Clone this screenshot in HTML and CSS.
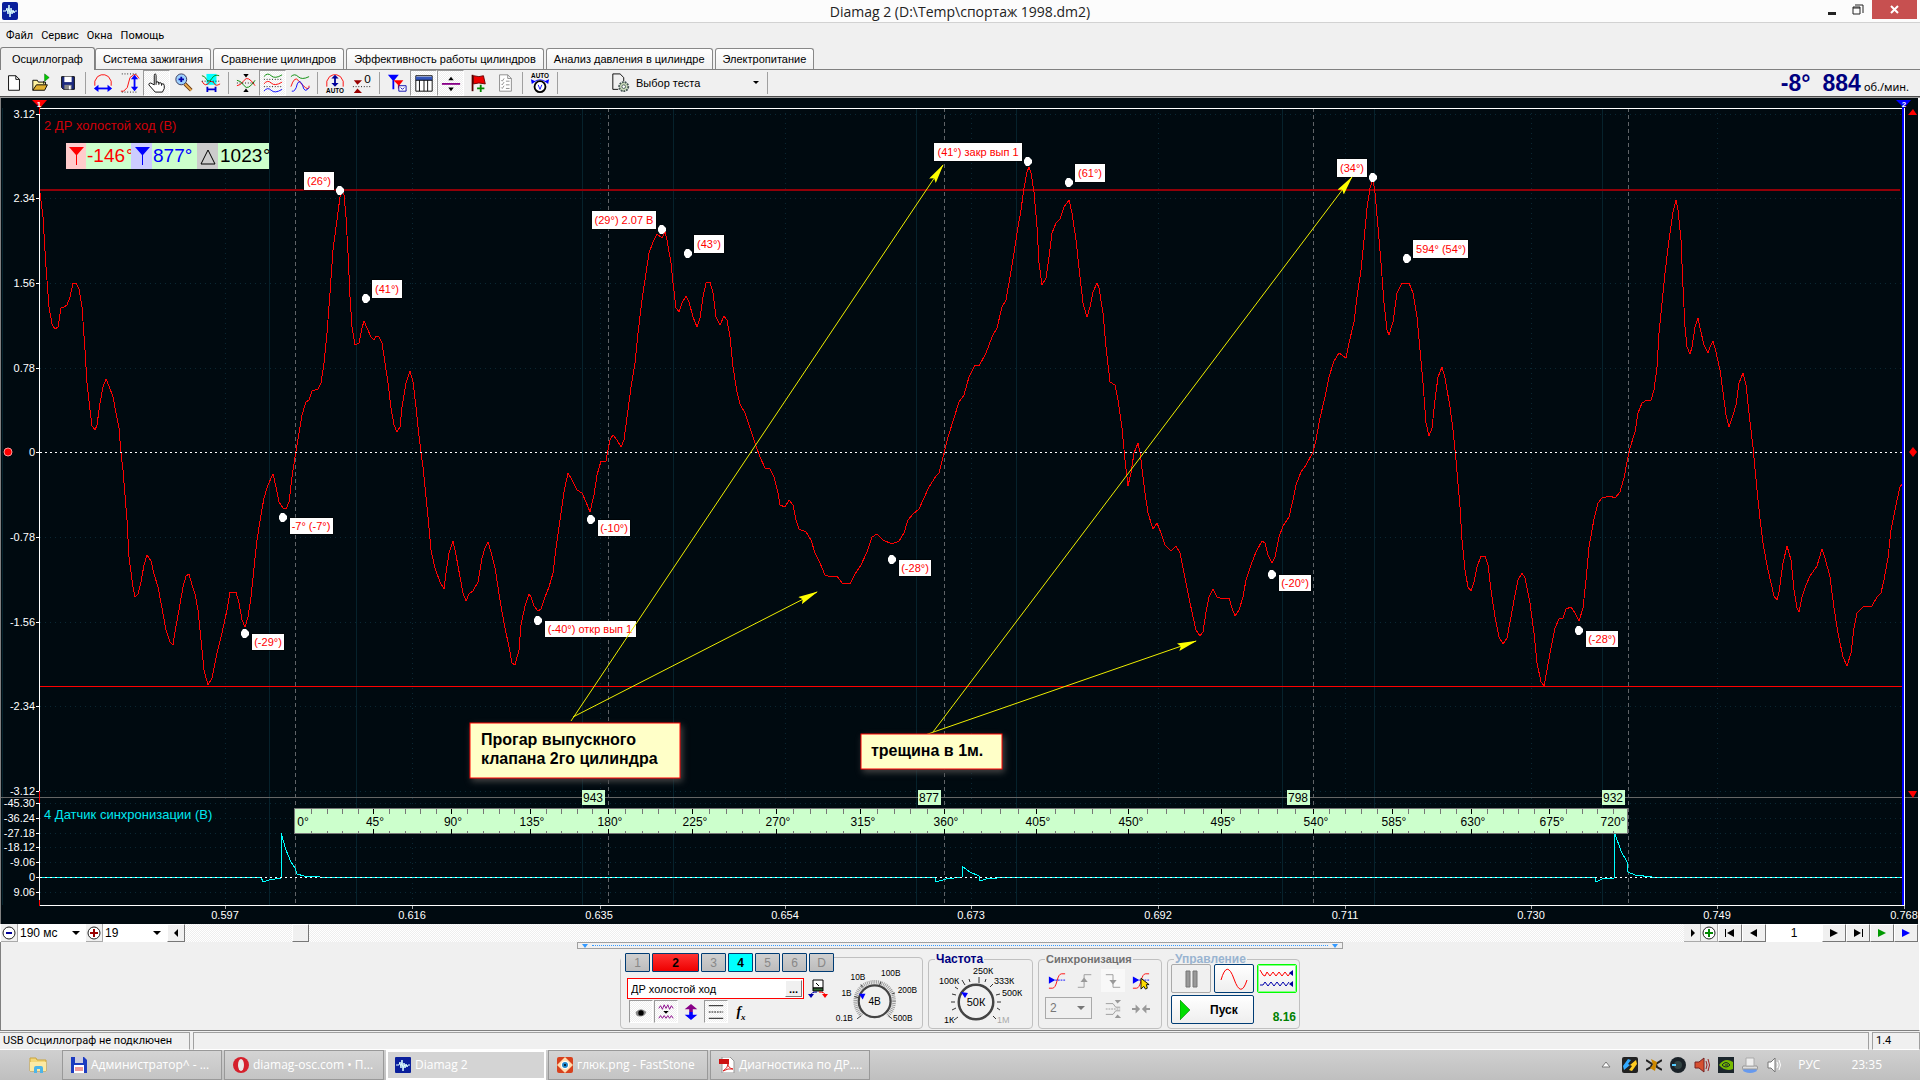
FILE: index.html
```html
<!DOCTYPE html>
<html lang="ru">
<head>
<meta charset="utf-8">
<title>Diamag 2 (D:\Temp\спортаж 1998.dm2)</title>
<link rel="stylesheet" href="styles.css">
</head>
<body>
<div class="app">
  <header class="titlebar">
    <svg class="app-icon" viewBox="0 0 16 18"><rect width="16" height="18" rx="2" fill="#0a1f9c"/><path d="M1 9h3l1-3 1 6 1-9 1 12 1-9 1 6 1-4 1 3 1-2h2" fill="none" stroke="#dff" stroke-width="1"/></svg>
    <h1 class="title">Diamag 2 (D:\Temp\спортаж 1998.dm2)</h1>
    <div class="window-buttons">
      <button class="win" aria-label="Свернуть"><svg viewBox="0 0 10 12" width="10" height="12"><path d="M1 8h8v3H1z" fill="#222"/></svg></button>
      <button class="win" aria-label="Развернуть"><svg viewBox="0 0 12 12" width="12" height="12"><path d="M3 1h8v8M1 3h7v7H1zM1 4h7" fill="none" stroke="#222"/></svg></button>
      <button class="win win-close" aria-label="Закрыть"><svg viewBox="0 0 10 10" width="10" height="10"><path d="M1 1l7 7M8 1L1 8" stroke="#fff" stroke-width="2"/></svg></button>
    </div>
  </header>

  <nav class="menu">
    <button>Файл</button><button>Сервис</button><button>Окна</button><button>Помощь</button>
  </nav>

  <div class="tabs" role="tablist">
    <button class="tab tab-active" role="tab">Осциллограф</button>
    <button class="tab" role="tab">Система зажигания</button>
    <button class="tab" role="tab">Сравнение цилиндров</button>
    <button class="tab" role="tab">Эффективность работы цилиндров</button>
    <button class="tab" role="tab">Анализ давления в цилиндре</button>
    <button class="tab" role="tab">Электропитание</button>
  </div>

  <div class="toolbar">
    <button class="tool" aria-label="Новый"><svg viewBox="0 0 22 22"><path d="M5 3h8l4 4v12H5z" fill="#fff" stroke="#000"/><path d="M13 3v4h4" fill="none" stroke="#000"/></svg></button>
    <button class="tool" aria-label="Открыть"><svg viewBox="0 0 22 22"><path d="M2 19V8h5l1 2h8v3" fill="#fff3a0" stroke="#000"/><path d="M2 19l4-6h12l-3 6z" fill="#e0b030" stroke="#000"/><path d="M15 1l5 4-5 4z" fill="#0c0" stroke="#060" stroke-width=".6"/><path d="M14 9v3" stroke="#000"/></svg></button>
    <button class="tool" aria-label="Сохранить"><svg viewBox="0 0 22 22"><path d="M4 4h14v14H6l-2-2z" fill="#1c2a80" stroke="#000"/><path d="M7 4h8v6H7z" fill="#fff"/><path d="M7 13h8v5H7z" fill="#888"/><path d="M12 14h2v4h-2z" fill="#fff"/></svg></button>
    <span class="sep"></span>
    <button class="tool" aria-label="Масштаб по ширине"><svg viewBox="0 0 22 22"><path d="M2 14V9l3-5 4-2h4l4 2 3 5v5" fill="none" stroke="#f00"/><path d="M3 17h16" stroke="#00f" stroke-width="2"/><path d="M1 17l5-4v8zM21 17l-5-4v8z" fill="#00f"/></svg></button>
    <button class="tool" aria-label="Масштаб по высоте"><svg viewBox="0 0 22 22"><path d="M1 20h3l4-4 3-11 4-3h3l3 4" fill="none" stroke="#f00"/><path d="M2 1h18M2 21h18" stroke="#000" stroke-dasharray="1 2"/><path d="M16 5v13" stroke="#00f" stroke-width="2"/><path d="M16 2l4 5h-8zM16 20l4-5h-8z" fill="#00f"/></svg></button>
    <button class="tool pressed" aria-label="Рука"><svg viewBox="0 0 22 22"><path d="M8 13V3q0-2 1-2t1 2v7q3-1 3 1 3-1 3 1 3-1 3 2v3l-2 4H9l-7-8q0-2 2-2z" fill="#fff" stroke="#000"/><path d="M10 10v3M13 11v2M16 12v2" stroke="#000"/></svg></button>
    <button class="tool" aria-label="Лупа"><svg viewBox="0 0 22 22"><path d="M12 12l7 7" stroke="#6b3a10" stroke-width="4"/><path d="M12 12l7 7" stroke="#f0b050" stroke-width="2"/><circle cx="8" cy="7" r="6" fill="#9cd0ff" stroke="#335"/><path d="M5 7h6M8 4v6" stroke="#00a" stroke-width="2"/></svg></button>
    <button class="tool" aria-label="Выделение"><svg viewBox="0 0 22 22"><path d="M6 1h11v12H6z" fill="#0ff"/><path d="M1 3q3 0 5 4 3 4 6-1t8-3" fill="none" stroke="#080"/><path d="M1 9q4 8 9 0 4 0 5 3t6 0" fill="none" stroke="#f00"/><path d="M1 9h20" stroke="#000" stroke-dasharray="1 2"/><path d="M7 18h9M7 15v6M16 15v6" stroke="#00c" stroke-width="2"/></svg></button>
    <span class="sep"></span>
    <button class="tool" aria-label="Совместить"><svg viewBox="0 0 22 22"><path d="M1 14q4 0 8-6t12 6" fill="none" stroke="#f00"/><path d="M1 8q4 0 8 6t12-6" fill="none" stroke="#080"/><path d="M1 11h20" stroke="#000" stroke-dasharray="1 2"/><path d="M8 1h6l-3 4zM8 21h6l-3-4z" fill="#000"/></svg></button>
    <button class="tool pressed" aria-label="Разнести"><svg viewBox="0 0 22 22"><path d="M1 4q4-5 8-1t12-1" fill="none" stroke="#080"/><path d="M1 12q4-5 8-1t12-1" fill="none" stroke="#f00"/><path d="M1 20q4-5 8-1t12-1" fill="none" stroke="#00f"/><path d="M1 7h20M1 15h20" stroke="#000" stroke-dasharray="1 2"/></svg></button>
    <button class="tool" aria-label="Наложить"><svg viewBox="0 0 22 22"><path d="M1 4q4-4 8 0t12 0" fill="none" stroke="#080"/><path d="M1 15q4-12 8-7t8 8 4-2" fill="none" stroke="#f00"/><path d="M2 20q4 1 6-8 3-6 6 2 2 9 7 2" fill="none" stroke="#00f"/></svg></button>
    <span class="sep"></span>
    <button class="tool" aria-label="Автомасштаб"><svg viewBox="0 0 22 22"><path d="M2 15V9l3-5 4-2h4l4 2 3 5v6" fill="none" stroke="#f00"/><path d="M11 4v9" stroke="#009" stroke-width="2"/><path d="M7 6l4-4 4 4zM7 11l4 4 4-4z" fill="#009"/><text x="11" y="22" class="icon-text">AUTO</text></svg></button>
    <button class="tool" aria-label="Ноль"><svg viewBox="0 0 22 22"><path d="M2 8h9l-5 5zM2 22h9l-5-5z" fill="#900"/><path d="M1 15h20" stroke="#000" stroke-dasharray="1 2"/><text x="17" y="11" class="icon-zero">0</text></svg></button>
    <span class="sep"></span>
    <button class="tool" aria-label="Метки"><svg viewBox="0 0 22 22"><path d="M1 2h12L8 8v10H6V8z" fill="#00f"/><path d="M7 8h11l-4 5v4h-2v-4z" fill="#f00"/><path d="M13 14h8v6h-8z" fill="#fff" stroke="#00a"/><path d="M15 16l2 2 2-2" fill="none" stroke="#00a"/></svg></button>
    <button class="tool pressed" aria-label="Таблица"><svg viewBox="0 0 22 22"><path d="M2 3h18v17H2z" fill="#fff" stroke="#000"/><path d="M2 4h18v4H2z" fill="#35b"/><path d="M6 8v12M11 8v12M15 8v12M2 8h18" stroke="#000"/></svg></button>
    <button class="tool pressed" aria-label="Уровень"><svg viewBox="0 0 22 22"><path d="M1 12h20" stroke="#808" stroke-width="2"/><path d="M8 8h6l-3-4zM8 16h6l-3 4z" fill="#000"/></svg></button>
    <button class="tool" aria-label="Флажок"><svg viewBox="0 0 22 22"><path d="M5 2v18" stroke="#500" stroke-width="2"/><path d="M6 3l6 1 5-1 2 9-7-1-6 1z" fill="#e00" stroke="#600"/><path d="M14 13v8M10 17h8" stroke="#080" stroke-width="2"/></svg></button>
    <button class="tool" aria-label="Список"><svg viewBox="0 0 22 22"><path d="M5 2h9l4 4v14H5z" fill="#fff" stroke="#888"/><path d="M14 2v4h4M7 8l1 1 2-3M7 12l1 1 2-3M7 16l1 1 2-3M12 9h4M12 13h4M12 17h4" fill="none" stroke="#888"/></svg></button>
    <span class="sep"></span>
    <button class="tool" aria-label="Авто"><svg viewBox="0 0 22 22"><text x="11" y="6" class="icon-text">AUTO</text><path d="M4 10q7-5 14 0" fill="none" stroke="#00f"/><path d="M1 7l5 2-4 3zM21 7l-5 2 4 3z" fill="#00f"/><circle cx="11" cy="15" r="6" fill="#fff" stroke="#000" stroke-width="2"/><path d="M9 13l2 5 2-5" fill="none" stroke="#00f"/></svg></button>
    <span class="sep"></span>
    <div class="test">
      <svg viewBox="0 0 22 22"><path d="M2 1h8l4 4v4M2 1v17h6" fill="none" stroke="#000"/><circle cx="14" cy="15" r="5" fill="#cdb" stroke="#455" stroke-width="2" stroke-dasharray="2 1"/><circle cx="14" cy="15" r="2" fill="#fff" stroke="#455"/></svg>
      <label class="drop test-drop"><select aria-label="Выбор теста"><option>Выбор теста</option></select></label>
    </div>
    <span class="sep"></span>
    <output class="readout"><b>-8°</b><b>884</b><span>об./мин.</span></output>
  </div>

  <svg class="chart" viewBox="0 98 1920 826" role="img" aria-label="Осциллограмма">
    <defs>
      <marker id="arrow" viewBox="0 0 20 8" refX="19" refY="4" markerWidth="20" markerHeight="8" markerUnits="userSpaceOnUse" orient="auto"><path d="M0 0L20 4L0 8L3 4z" fill="#ff0"/></marker>
      <path id="dot" d="M-2 -4h3l3 3v3l-3 3h-3l-2 -3v-3z" fill="#fff"/>
    </defs>
    <rect y="98" width="1920" height="826" fill="#000a10"/>
    <g class="crisp">
      <path class="grid-solid" d="M2 108V905M269 108V905M356 108V905M582 108V905M673 108V905M916 108V905M1016 108V905M1282 108V905M1374 108V905M1602 108V905"/>
      <path class="grid-dots" d="M40 114H1904M40 198H1904M40 283H1904M40 368H1904M40 537H1904M40 622H1904M40 706H1904M40 791H1904M40 803H1904M40 818H1904M40 833H1904M40 847H1904M40 862H1904M40 892H1904M225 108V905M412 108V905M600 108V905M785 108V905M971 108V905M1158 108V905M1345 108V905M1531 108V905M1717 108V905"/>
      <path class="revs" d="M295 108V905M608 108V905M944 108V905M1313 108V905M1628 108V905"/>
      <path d="M0 797H1920" stroke="#666"/>
      <path d="M40 190H1900" stroke="#900008" stroke-width="2"/>
      <path d="M40 686H1904" stroke="#f00"/>
    </g>
    <path class="crisp trace" stroke="#f00" d="M40 193L43 217 46 267 49 307 52 324 55 329 58 327 61 308 64 307 67 305 70 297 73 283 76 283 79 289 82 307 85 350 87 383 90 410 92 426 95 430 97 425 100 403 103 387 106 379 109 386 113 397 116 413 119 428 121 453 123 470 127 520 129 557 133 587 135 597 138 594 141 582 144 565 147 555 151 561 154 574 158 587 162 608 166 630 170 642 173 645 175 632 179 610 183 587 186 576 189 574 192 585 195 594 198 610 201 640 204 670 208 685 212 678 217 653 222 633 227 610 230 592 236 592 239 603 242 620 245 627 248 617 251 597 254 568 257 540 261 515 264 498 268 485 273 474 276 487 279 502 283 508 286 509 289 502 292 477 295 457 299 433 302 415 306 402 309 400 312 391 318 389 321 383 324 363 327 333 330 293 333 250 337 220 340 197 342 191 344 195 346 217 348 253 350 297 352 327 355 345 359 343 362 328 364 321 367 328 371 337 374 340 376 336 379 337 382 343 385 363 388 383 391 408 394 425 397 432 400 427 402 407 406 383 410 371 413 382 416 407 418 427 421 453 423 467 428 517 431 550 435 568 440 582 444 589 446 573 449 553 453 541 456 555 460 577 463 593 466 601 469 594 473 591 478 582 482 558 485 548 488 542 491 552 495 568 500 600 504 623 509 647 512 663 515 665 519 650 521 625 525 606 529 594 531 597 534 606 538 611 541 609 545 597 549 587 553 573 556 548 560 520 564 492 568 473 572 480 577 490 582 493 586 502 590 512 594 495 597 475 601 461 606 461 608 450 610 440 613 435 617 440 621 447 624 440 628 410 631 387 635 363 638 333 642 300 646 273 649 253 653 242 657 234 662 238 665 232 667 240 671 263 673 283 676 308 679 312 682 303 686 296 689 302 693 317 697 327 700 318 703 297 706 283 710 282 713 293 716 317 720 325 724 316 727 320 730 337 733 367 737 392 740 404 745 413 750 428 755 443 760 457 765 468 770 469 774 477 778 493 780 505 785 507 789 500 793 505 796 520 799 529 806 532 811 540 815 553 820 563 825 575 831 577 837 576 842 583 850 584 855 574 861 565 867 552 872 537 877 534 883 540 892 544 899 541 904 533 908 520 913 514 919 509 924 498 929 487 936 476 939 473 944 453 948 437 954 418 959 402 964 395 969 377 975 365 979 366 986 353 992 337 997 328 1002 307 1006 300 1010 277 1014 253 1017 233 1021 210 1024 188 1027 172 1029 167 1031 173 1034 192 1037 227 1039 263 1042 285 1046 278 1049 257 1052 233 1056 223 1060 219 1064 207 1069 200 1072 213 1076 240 1080 277 1083 303 1087 317 1090 307 1093 292 1097 283 1099 288 1103 313 1106 347 1110 382 1115 385 1118 400 1122 428 1125 460 1128 486 1131 473 1134 453 1138 443 1140 452 1143 477 1145 493 1148 513 1153 529 1157 523 1161 533 1165 545 1171 551 1176 546 1180 553 1184 573 1188 593 1193 617 1196 630 1200 636 1203 632 1206 612 1209 597 1213 589 1217 597 1223 599 1229 598 1232 608 1235 616 1239 610 1243 597 1246 580 1251 565 1256 552 1262 541 1265 543 1268 555 1272 563 1275 557 1279 537 1283 526 1289 517 1293 500 1296 485 1301 472 1306 465 1313 452 1316 440 1320 418 1325 397 1329 377 1334 361 1339 353 1346 358 1349 343 1354 322 1357 297 1361 270 1364 240 1367 208 1370 188 1373 179 1375 193 1378 227 1381 263 1384 303 1387 330 1389 335 1393 322 1397 293 1402 283 1409 283 1413 293 1417 317 1420 350 1423 383 1426 423 1429 436 1432 428 1435 400 1438 377 1442 367 1445 378 1450 407 1453 430 1456 460 1460 507 1462 540 1465 570 1468 587 1471 591 1474 582 1477 567 1481 556 1485 556 1488 565 1491 590 1495 617 1499 637 1503 644 1507 638 1511 617 1515 595 1518 580 1522 573 1525 578 1530 603 1534 633 1537 663 1541 682 1544 686 1547 670 1551 648 1555 628 1559 619 1563 618 1566 609 1571 607 1575 613 1579 621 1583 608 1586 580 1589 547 1594 519 1598 503 1602 498 1610 496 1615 498 1620 492 1624 478 1627 462 1630 448 1635 432 1638 413 1642 403 1647 400 1651 400 1654 390 1657 367 1659 333 1662 303 1665 273 1669 240 1673 212 1676 200 1678 210 1681 240 1683 287 1685 327 1687 347 1690 354 1692 347 1695 327 1698 318 1700 328 1704 345 1708 353 1710 347 1713 341 1716 352 1720 370 1723 392 1726 415 1729 427 1733 415 1736 405 1739 383 1743 373 1746 385 1749 413 1753 447 1757 490 1760 519 1763 543 1767 565 1771 583 1774 596 1777 600 1779 592 1783 563 1787 546 1791 560 1794 590 1797 608 1799 612 1802 597 1806 585 1810 576 1817 566 1822 549 1825 558 1830 577 1834 608 1838 633 1843 657 1847 666 1851 653 1854 628 1857 613 1864 606 1872 606 1877 597 1881 593 1884 580 1888 558 1891 530 1895 510 1897 500 1900 487 1903 483"/>
    <g class="crisp">
      <path class="zero" d="M40 452H1904"/>
      <path class="trace" stroke="#0ff" d="M40 877H261L263 882 269 880 281 878V833L286 850 291 862 295 868 297 874 304 876 320 877H935L936 882 946 879 962 877V866L970 872 979 876 980 881 986 879 1008 877H1595L1596 882 1602 879 1614 878 1615 834 1621 851 1627 862 1628 872 1635 875 1652 877H1904"/>
      <path class="zero" d="M40 877H1904"/>
      <path class="axis" d="M39 108V905M39 108H1904V905H39M36 114h4M36 198h4M36 283h4M36 368h4M36 452h4M36 537h4M36 622h4M36 706h4M36 791h4M36 803h4M36 818h4M36 833h4M36 847h4M36 862h4M36 877h4M36 892h4"/>
      <path d="M225 906v3M412 906v3M600 906v3M785 906v3M971 906v3M1158 906v3M1345 906v3M1531 906v3M1717 906v3M1904 906v3" stroke="#aaa"/>
      <path d="M1903 104V905" stroke="#00f" stroke-width="2"/>
      <path d="M39 104v10M39 791v12M39 900v6" stroke="#f00"/>
    </g>
    <path d="M32 100h15l-7 8z" fill="#f00"/><text class="flag" x="39" y="107">1</text>
    <path d="M1896 100h15l-7 8z" fill="#00f"/><text class="flag" x="1904" y="107">2</text>
    <path d="M1908 115l5-6 4 6zM1908 791l5 7 4-7zM1909 452l4-5 4 5-4 5z" fill="#f00"/>
    <circle cx="8" cy="452" r="4" fill="#f00" stroke="#f99"/>

    <g class="axis-y">
      <text x="35" y="118">3.12</text><text x="35" y="202">2.34</text><text x="35" y="287">1.56</text><text x="35" y="372">0.78</text><text x="35" y="456">0</text><text x="35" y="541">-0.78</text><text x="35" y="626">-1.56</text><text x="35" y="710">-2.34</text><text x="35" y="795">-3.12</text>
      <text x="35" y="807">-45.30</text><text x="35" y="822">-36.24</text><text x="35" y="837">-27.18</text><text x="35" y="851">-18.12</text><text x="35" y="866">-9.06</text><text x="35" y="881">0</text><text x="35" y="896">9.06</text>
    </g>
    <g class="axis-x">
      <text x="225" y="919">0.597</text><text x="412" y="919">0.616</text><text x="599" y="919">0.635</text><text x="785" y="919">0.654</text><text x="971" y="919">0.673</text><text x="1158" y="919">0.692</text><text x="1345" y="919">0.711</text><text x="1531" y="919">0.730</text><text x="1717" y="919">0.749</text><text x="1904" y="919">0.768</text>
    </g>
    <text class="channel" x="44" y="130" fill="#d00008">2 ДР холостой ход (В)</text>
    <text class="channel" x="44" y="819" fill="#00e8f0">4 Датчик синхронизации (В)</text>

    <g class="crisp">
      <rect x="66" y="143" width="203" height="26" fill="#cfc"/>
      <rect x="66" y="143" width="20" height="26" fill="#fcc"/><rect x="131" y="143" width="21" height="26" fill="#ccf"/><rect x="197" y="143" width="21" height="26" fill="#ccc"/>
    </g>
    <path d="M69 147h15l-7 8v10h-1v-10z" fill="#f00"/><path d="M135 147h15l-7 8v10h-1v-10z" fill="#00f"/><path d="M201 164l7-14 7 14z" fill="none" stroke="#000"/>
    <g class="measure"><text x="87" y="162" fill="#f00">-146</text><text x="153" y="162" fill="#00f">877°</text><text x="220" y="162">1023</text></g>
    <svg x="125" y="143" width="6" height="26"><text class="degree" x="1" y="19" fill="#f00">°</text></svg>
    <svg x="262" y="143" width="7" height="26"><text class="degree" x="1" y="19">°</text></svg>

    <g class="tags">
      <rect x="582" y="790" width="23" height="15"/><rect x="918" y="790" width="23" height="15"/><rect x="1287" y="790" width="23" height="15"/><rect x="1602" y="790" width="23" height="15"/>
      <text x="593" y="802">943</text><text x="929" y="802">877</text><text x="1298" y="802">798</text><text x="1613" y="802">932</text>
    </g>
    <g class="ruler">
      <rect class="crisp" x="294" y="808" width="1333" height="25"/>
      <path class="crisp minor" d="M311 809v5M327 809v5M342 809v5M358 809v5M389 809v5M405 809v5M420 809v5M436 809v5M467 809v5M483 809v5M499 809v5M514 809v5M546 809v5M561 809v5M577 809v5M592 809v5M625 809v5M642 809v5M658 809v5M675 809v5M709 809v5M726 809v5M742 809v5M759 809v5M793 809v5M810 809v5M826 809v5M843 809v5M877 809v5M894 809v5M910 809v5M927 809v5M963 809v5M981 809v5M1000 809v5M1018 809v5M1055 809v5M1074 809v5M1092 809v5M1110 809v5M1147 809v5M1166 809v5M1184 809v5M1203 809v5M1240 809v5M1258 809v5M1277 809v5M1295 809v5M1329 809v5M1345 809v5M1361 809v5M1377 809v5M1408 809v5M1424 809v5M1440 809v5M1456 809v5M1487 809v5M1503 809v5M1518 809v5M1534 809v5M1566 809v5M1582 809v5M1597 809v5M1613 809v5"/>
      <path class="crisp minor" d="M311 831v2M327 831v2M342 831v2M358 831v2M389 831v2M405 831v2M420 831v2M436 831v2M467 831v2M483 831v2M499 831v2M514 831v2M546 831v2M561 831v2M577 831v2M592 831v2M625 831v2M642 831v2M658 831v2M675 831v2M709 831v2M726 831v2M742 831v2M759 831v2M793 831v2M810 831v2M826 831v2M843 831v2M877 831v2M894 831v2M910 831v2M927 831v2M963 831v2M981 831v2M1000 831v2M1018 831v2M1055 831v2M1074 831v2M1092 831v2M1110 831v2M1147 831v2M1166 831v2M1184 831v2M1203 831v2M1240 831v2M1258 831v2M1277 831v2M1295 831v2M1329 831v2M1345 831v2M1361 831v2M1377 831v2M1408 831v2M1424 831v2M1440 831v2M1456 831v2M1487 831v2M1503 831v2M1518 831v2M1534 831v2M1566 831v2M1582 831v2M1597 831v2M1613 831v2"/>
      <path class="crisp major" d="M373 809v5M451 809v5M530 809v5M608 809v5M692 809v5M776 809v5M860 809v5M944 809v5M1036 809v5M1128 809v5M1221 809v5M1313 809v5M1392 809v5M1471 809v5M1549 809v5M373 829v5M451 829v5M530 829v5M608 829v5M692 829v5M776 829v5M860 829v5M944 829v5M1036 829v5M1128 829v5M1221 829v5M1313 829v5M1392 829v5M1471 829v5M1549 829v5"/>
      <text x="303" y="826">0°</text><text x="375" y="826">45°</text><text x="453" y="826">90°</text><text x="532" y="826">135°</text><text x="610" y="826">180°</text><text x="695" y="826">225°</text><text x="778" y="826">270°</text><text x="863" y="826">315°</text><text x="946" y="826">360°</text><text x="1038" y="826">405°</text><text x="1131" y="826">450°</text><text x="1223" y="826">495°</text><text x="1316" y="826">540°</text><text x="1394" y="826">585°</text><text x="1473" y="826">630°</text><text x="1552" y="826">675°</text><text x="1613" y="826">720°</text>
    </g>

    <use href="#dot" x="340" y="190"/><use href="#dot" x="366" y="298"/><use href="#dot" x="283" y="517"/><use href="#dot" x="245" y="633"/><use href="#dot" x="538" y="620"/><use href="#dot" x="591" y="519"/><use href="#dot" x="662" y="229"/><use href="#dot" x="688" y="253"/><use href="#dot" x="1028" y="161"/><use href="#dot" x="1069" y="182"/><use href="#dot" x="892" y="559"/><use href="#dot" x="1272" y="574"/><use href="#dot" x="1373" y="177"/><use href="#dot" x="1407" y="258"/><use href="#dot" x="1579" y="630"/>
    <g class="notes">
      <rect x="304" y="172" width="30" height="18"/><text x="319" y="185">(26°)</text>
      <rect x="372" y="280" width="30" height="18"/><text x="387" y="293">(41°)</text>
      <rect x="592" y="211" width="64" height="18"/><text x="624" y="224">(29°) 2.07 В</text>
      <rect x="694" y="235" width="30" height="18"/><text x="709" y="248">(43°)</text>
      <rect x="934" y="143" width="88" height="18"/><text x="978" y="156">(41°) закр вып 1</text>
      <rect x="1075" y="164" width="30" height="18"/><text x="1090" y="177">(61°)</text>
      <rect x="1337" y="159" width="30" height="18"/><text x="1352" y="172">(34°)</text>
      <rect x="1413" y="240" width="55" height="18"/><text x="1441" y="253">594° (54°)</text>
      <rect x="290" y="518" width="43" height="16"/><text x="311" y="530">-7° (-7°)</text>
      <rect x="252" y="634" width="32" height="16"/><text x="268" y="646">(-29°)</text>
      <rect x="545" y="621" width="91" height="16"/><text x="590" y="633">(-40°) откр вып 1</text>
      <rect x="598" y="520" width="32" height="16"/><text x="614" y="532">(-10°)</text>
      <rect x="899" y="560" width="32" height="16"/><text x="915" y="572">(-28°)</text>
      <rect x="1279" y="575" width="32" height="16"/><text x="1295" y="587">(-20°)</text>
      <rect x="1586" y="631" width="32" height="16"/><text x="1602" y="643">(-28°)</text>
    </g>
    <g class="arrows"><path d="M571 721L943 165"/><path d="M573 717L817 592"/><path d="M933 732L1352 177"/><path d="M925 735L1196 641"/></g>
    <g class="callout"><rect x="470" y="723" width="210" height="55"/><text x="481" y="745">Прогар выпускного</text><text x="481" y="764">клапана 2го цилиндра</text></g>
    <g class="callout"><rect x="861" y="734" width="141" height="35"/><text x="871" y="756">трещина в 1м.</text></g>
    <path class="crisp" d="M0 98V924" stroke="#808080" stroke-width="2"/><path class="crisp" d="M1919 98V924" stroke="#fff" stroke-width="2"/>
  </svg>

  <div class="scrollrow">
    <button class="small" aria-label="Уменьшить"><svg viewBox="0 0 16 16"><circle cx="8" cy="8" r="6" fill="#fff" stroke="#222"/><path d="M5 8h6" stroke="#009" stroke-width="2"/></svg></button>
    <label class="drop span-drop"><select aria-label="Развертка"><option>190 мс</option></select></label>
    <button class="small" aria-label="Увеличить"><svg viewBox="0 0 16 16"><circle cx="8" cy="8" r="6" fill="#fff" stroke="#222"/><path d="M4 8h8M8 4v8" stroke="#900" stroke-width="2"/></svg></button>
    <label class="drop step-drop"><select aria-label="Деление"><option>19</option></select></label>
    <button class="raised" aria-label="Влево"><svg viewBox="0 0 16 16"><path d="M10 4v8L6 8z"/></svg></button>
    <div class="track"><span class="thumb"></span></div>
    <button class="small" aria-label="Вправо"><svg viewBox="0 0 16 16"><path d="M7 4v8l4-4z"/></svg></button>
    <button class="small" aria-label="Добавить"><svg viewBox="0 0 16 16"><circle cx="8" cy="8" r="6" fill="#fff" stroke="#222"/><path d="M4 8h8M8 4v8" stroke="#080" stroke-width="2"/></svg></button>
    <button class="raised nav" aria-label="В начало"><svg viewBox="0 0 16 16"><path d="M3 4h1v8H3zM12 4v8L5 8z"/></svg></button>
    <button class="raised nav" aria-label="Назад"><svg viewBox="0 0 16 16"><path d="M11 4v8L4 8z"/></svg></button>
    <output class="page">1</output>
    <button class="raised nav" aria-label="Вперед"><svg viewBox="0 0 16 16"><path d="M4 4v8l8-4z"/></svg></button>
    <button class="raised nav" aria-label="В конец"><svg viewBox="0 0 16 16"><path d="M4 4v8l7-4zM12 4h1v8h-1z"/></svg></button>
    <button class="raised nav" aria-label="Воспроизвести"><svg viewBox="0 0 16 16"><path d="M4 4v8l8-4z" fill="#090"/></svg></button>
    <button class="raised nav" aria-label="Быстро"><svg viewBox="0 0 16 16"><path d="M4 4v8l8-4z" fill="#00f"/></svg></button>
  </div>

  <main class="panel">
    <div class="splitter"><i></i><span></span><i></i></div>
    <div class="groups">
      <section class="group group-channel">
        <div class="channel-left">
          <div class="channels">
            <button class="ch">1</button><button class="ch ch-red">2</button><button class="ch">3</button><button class="ch ch-cyan">4</button><button class="ch">5</button><button class="ch">6</button><button class="ch">D</button>
          </div>
          <div class="row">
            <div class="sensor"><input aria-label="Датчик" value="ДР холостой ход"><button aria-label="Выбрать датчик">...</button></div>
            <svg class="i20" viewBox="0 0 20 20"><path d="M5 1h10v8H5z" fill="#fff" stroke="#000"/><path d="M5 9h10v3H5z" fill="#363" stroke="#000"/><path d="M8 4l3 3" stroke="#000"/><path d="M9 13q-6 0-6 3" fill="none" stroke="#00a"/><path d="M11 13q6 0 6 3" fill="none" stroke="#f00"/><path d="M0 15h6l-3 4z" fill="#00a"/><path d="M14 15h6l-3 4z" fill="#f00"/></svg>
          </div>
          <div class="row row-tools">
            <button class="mini pressed" aria-label="Показ"><svg viewBox="0 0 20 20"><path d="M4 10q6-6 12 0-2 5-7 5t-5-5z" fill="#888"/><circle cx="10" cy="11" r="3"/></svg></button>
            <button class="mini pressed" aria-label="Фильтр"><svg viewBox="0 0 20 20"><path d="M2 6l2-3 2 4 2-5 2 4 2-4 2 5 2-4 2 3" fill="none" stroke="#808"/><path d="M2 17l2-3 2 3 2-3 2 3 2-3 2 3 2-3 2 3" fill="none" stroke="#808"/><path d="M7 9h6l-3 3z"/></svg></button>
            <button class="mini" aria-label="Инверсия"><svg viewBox="0 0 20 20"><path d="M10 1l7 6h-5v3H8V7H3z" fill="#808"/><path d="M10 19l7-6h-5v-3H8v3H3z" fill="#00f"/></svg></button>
            <button class="mini pressed" aria-label="Линии"><svg viewBox="0 0 20 20"><path d="M2 3h16M2 17h16" stroke="#000"/><path d="M2 10h16" stroke="#000" stroke-dasharray="2 1"/></svg></button>
            <button class="mini fx" aria-label="Функция">f<sub>x</sub></button>
          </div>
        </div>
        <svg class="knob" viewBox="830 958 92 68" role="img" aria-label="Чувствительность">
          <circle class="fine-ticks" cx="874" cy="1002" r="21"/><path class="cover" d="M874 1002L850 1030H898z"/>
          <path class="knob-tick" d="M859 984l2 3M881 981l-2 4M893 994l3-1M852 997l4 1M855 1021l4-3M893 1021l-4-3"/>
          <circle class="knob-ring" cx="874" cy="1002" r="17"/><circle cx="874" cy="1002" r="16" fill="#f0f0f0"/>
          <path d="M857 994h7l-3 6z" fill="#00f"/><text class="knob-value" x="874" y="1006">4В</text>
          <text x="848" y="979">10В</text><text x="881" y="975">100В</text><text x="899" y="993">200В</text><text x="838" y="996">1В</text><text x="832" y="1023">0.1В</text><text x="894" y="1023">500В</text>
        </svg>
      </section>

      <fieldset class="group group-freq"><legend>Частота</legend>
        <svg class="knob" viewBox="932 962 96 64" role="img" aria-label="Частота">
          <path class="knob-tick" d="M963 980l3 5M980 977v6M994 984l-3 3M1001 994l-4 1M955 1020l4-3M997 1019l-3-3M970 979l1 3M987 979l-1 3M956 987l3 2M953 994l4 1M952 1002h4M953 1010l4-2M1001 1010l-3-2M1002 1002h-4"/>
          <circle class="knob-ring" cx="977" cy="1002" r="17"/><circle cx="977" cy="1002" r="16" fill="#f0f0f0"/>
          <path d="M962 992l7 1-3 5z" fill="#00f"/><text class="knob-value" x="977" y="1006">50К</text>
          <text x="940" y="984">100К</text><text x="974" y="974">250К</text><text x="995" y="984">333К</text><text x="1003" y="996">500К</text><text x="945" y="1023">1К</text><text x="998" y="1023" fill="#aaa">1М</text>
        </svg>
      </fieldset>

      <fieldset class="group group-sync"><legend>Синхронизация</legend>
        <div class="sync-grid">
          <button class="mini" aria-label="Уровень"><svg viewBox="0 0 20 20"><path d="M1 18h4q3 0 5-8t5-8h4" fill="none" stroke="#f00"/><path d="M2 9h17" stroke="#00f" stroke-dasharray="2 1"/><path d="M1 5l7 4-7 4z" fill="#00f"/></svg></button>
          <button class="mini" aria-label="Фронт"><svg viewBox="0 0 20 20"><path d="M2 17h7V3h8" fill="none" stroke="#999"/><path d="M5 11l4-5 4 5z" fill="#999"/></svg></button>
          <button class="mini pressed-flat" aria-label="Спад"><svg viewBox="0 0 20 20"><path d="M2 3h8v14h8" fill="none" stroke="#999"/><path d="M6 9l4 5 4-5z" fill="#999"/></svg></button>
          <button class="mini" aria-label="Выбор"><svg viewBox="0 0 20 20"><path d="M1 18h4q3 0 5-8t5-8h4" fill="none" stroke="#f00"/><path d="M2 9h17" stroke="#00f" stroke-dasharray="2 1"/><path d="M1 5l7 4-7 4z" fill="#00f"/><path d="M10 7v12l3-3 2 3 2-1-1-4h3z" fill="#fd0" stroke="#000"/></svg></button>
          <label class="drop sync-drop"><select aria-label="Канал"><option>2</option></select></label>
          <button class="mini" aria-label="Разделить"><svg viewBox="0 0 20 20"><path d="M2 4h8l3 4h5M2 16h8l3-4h5" fill="none" stroke="#999"/><path d="M2 10h16" stroke="#999" stroke-dasharray="2 1"/><path d="M12 0h7l-4 4zM12 20h7l-4-4z" fill="#999"/></svg></button>
          <button class="mini" aria-label="Сжать"><svg viewBox="0 0 20 20"><path d="M0 9h4V5l5 5-5 5v-4H0zM20 9h-4V5l-5 5 5 5v-4h4z" fill="#999"/></svg></button>
        </div>
      </fieldset>

      <fieldset class="group group-control"><legend>Управление</legend>
        <div class="control-grid">
          <button class="ctl ctl-off" aria-label="Пауза"><svg viewBox="0 0 36 24"><path d="M13 4h4v16h-4zM20 4h4v16h-4z" fill="#999" stroke="#777"/></svg></button>
          <button class="ctl" aria-label="Синус"><svg viewBox="0 0 36 24"><path d="M5 13Q11-8 18 12t13 1" fill="none" stroke="#f00"/></svg></button>
          <button class="ctl ctl-green" aria-label="Запись"><svg viewBox="0 0 36 24"><path d="M1 3l3 5 2 1 2-4 3 4 3-4 3 4 3-4 3 4 3-4 3 4 3-4" fill="none" stroke="#f00"/><path d="M1 18h3l2-3 3 4 3-4 3 4 3-4 3 4 3-4 3 4 3-4" fill="none" stroke="#00a"/><path d="M30 6l4-3v6zM30 17l4-3v6z" fill="#009"/></svg></button>
          <button class="ctl ctl-start"><svg viewBox="0 0 10 20" width="10" height="20"><path d="M0 0l10 10L0 20z" fill="#0d0" stroke="#060" stroke-width=".5"/></svg>Пуск</button>
          <output class="rate">8.16</output>
        </div>
      </fieldset>
    </div>
  </main>

  <footer class="status">
    <span class="cell cell-msg">USB Осциллограф не подключен</span><span class="cell cell-fill"></span><span class="cell cell-ver">1.4</span>
  </footer>

  <div class="taskbar">
    <button class="explorer" aria-label="Проводник"><svg viewBox="0 0 18 16" width="18" height="16"><path d="M1 1h6l1 2h9v11H1z" fill="#f4d878" stroke="#caa43c"/><path d="M1 5h16v9H1z" fill="#fbe9a4"/><path d="M5 16v-5q0-2 2-2h5q2 0 2 2v5h-3v-4H8v4z" fill="#4cb4e8"/></svg></button>
    <button class="task"><svg viewBox="0 0 16 16"><path d="M0 0h13l3 3v13H0z" fill="#1c3bc0"/><path d="M4 0h8v6H4z" fill="#ccd"/><path d="M3 8h10v8H3z" fill="#fff"/><path d="M4 11h8M4 13h8" stroke="#d33"/></svg><span>Администратор^ - ...</span></button>
    <button class="task"><svg viewBox="0 0 16 16"><ellipse cx="8" cy="8" rx="8" ry="8" fill="#d5202c"/><ellipse cx="8" cy="8" rx="3" ry="6" fill="#e8e8e8"/></svg><span>diamag-osc.com • П...</span></button>
    <button class="task task-active"><svg viewBox="0 0 16 16"><rect width="16" height="16" rx="1" fill="#0a1f9c"/><path d="M1 8h3l1-3 1 6 1-8 1 11 1-8 1 5 1-4 1 3 1-2h2" fill="none" stroke="#dff"/></svg><span>Diamag 2</span></button>
    <button class="task"><svg viewBox="0 0 16 16"><rect width="16" height="16" rx="2" fill="#d8401c"/><path d="M0 8l8-8 8 8-8 8z" fill="#ffdcb0"/><circle cx="8" cy="8" r="4" fill="#fff"/><circle cx="8" cy="8" r="3" fill="#28c"/><circle cx="8" cy="8" r="1"/></svg><span>глюк.png - FastStone</span></button>
    <button class="task"><svg viewBox="0 0 16 16"><path d="M3 0h8l4 4v12H3z" fill="#fff" stroke="#999"/><path d="M0 2h10v5H0z" fill="#c11"/><path d="M4 14q5-3 5-7 0 4 5 5-5-1-10 2" fill="none" stroke="#d22"/></svg><span>Диагностика по ДР....</span></button>
    <div class="tray">
      <svg viewBox="0 0 16 16"><path d="M4 10l4-5 4 5z" fill="#fff" stroke="#777"/></svg>
      <svg viewBox="0 0 16 16"><rect width="16" height="16" rx="2" fill="#222"/><path d="M1 9l5-7 3 1-3 4 2 1-6 5z" fill="#3af"/><path d="M15 7l-5 7-3-1 3-4-2-1 6-5z" fill="#fc2"/></svg>
      <svg viewBox="0 0 16 16"><path d="M0 3l6 4-1 3-5 3M16 3l-6 4 1 3 5 3" fill="none" stroke="#222" stroke-width="2"/><path d="M5 2l6 3-2 9-5-3 3-3z" fill="#c80"/></svg>
      <svg viewBox="0 0 16 16"><circle cx="8" cy="8" r="8" fill="#1a2228"/><circle cx="8" cy="8" r="4" fill="#344"/><path d="M2 7h4v2H2z" fill="#5cf"/></svg>
      <svg viewBox="0 0 16 16"><path d="M1 5h4l5-4v14l-5-4H1z" fill="#d65030" stroke="#722"/><path d="M12 4q2 4 0 8M14 2q3 6 0 12" fill="none" stroke="#922"/></svg>
      <svg viewBox="0 0 16 16"><rect width="16" height="16" fill="#1c262c"/><path d="M1 8q6-8 14-3v7q-8 3-14-4z" fill="#76b900"/><path d="M4 8q4-5 8 0-4 4-8 0zM7 8h3" fill="none" stroke="#1c262c"/></svg>
      <svg viewBox="0 0 16 16"><ellipse cx="8" cy="13" rx="7" ry="3" fill="#69e"/><path d="M1 9h14l1 3H0z" fill="#ddd" stroke="#999"/><path d="M4 1h8v8H4z" fill="#eee" stroke="#aaa"/></svg>
      <svg viewBox="0 0 16 16"><path d="M2 5h3l4-4v14l-4-4H2z" fill="#fff" stroke="#777"/><path d="M11 5q2 3 0 6M13 3q3 5 0 10" fill="none" stroke="#fff"/></svg>
      <span class="lang">РУС</span><time class="clock">23:35</time>
    </div>
  </div>
</div>
</body>
</html>
```
FILE: styles.css
```css
* { box-sizing: border-box; }
body { margin: 0; background: #f0f0f0; font: 11px/14px "Liberation Sans", sans-serif; color: #000; }
button, input, select { font: inherit; color: inherit; margin: 0; padding: 0; border: 0; background: none; border-radius: 0; }
svg { display: block; }
.app { display: flex; flex-direction: column; min-height: 100vh; }

.titlebar { display: grid; grid-template-columns: 1fr auto 1fr; align-items: start; height: 23px; background: #fcfcfc; border-bottom: 1px solid #d2d2d2; }
.app-icon { width: 16px; height: 18px; margin: 2px; }
.title { margin: 0; font: 14px/23px "Open Sans", sans-serif; color: #222; }
.window-buttons { display: flex; justify-content: flex-end; padding-right: 3px; }
.win { width: 26px; height: 19px; display: grid; place-items: center; }
.win-close { width: 45px; margin-left: 1px; background: #c75050; }

.menu { display: flex; gap: 8px; height: 24px; padding: 0 6px; font: 11px/26px Roboto, sans-serif; }

.tabs { display: flex; gap: 2px; align-items: flex-end; height: 23px; border-bottom: 1px solid #808080; }
.tab { height: 21px; padding: 0 7px; border: 1px solid #888; border-bottom: 0; border-radius: 3px 3px 0 0; background: linear-gradient(#fff, #f0f0f0); }
.tab-active { height: 23px; margin: 0 -2px -1px 0; padding: 0 11px; background: #f0f0f0; border-color: #808080; }

.toolbar { display: flex; align-items: stretch; height: 28px; border-bottom: 2px groove #a0a0a0; }
.tool { width: 27px; height: 26px; display: grid; place-items: center; }
.tool svg, .test svg { width: 20px; height: 20px; }
.pressed { background: repeating-conic-gradient(#fff 0 25%, #eee 0 50%) 0 0 / 2px 2px; border: 1px solid; border-color: #999 #fff #fff #999; }
.sep { width: 8px; margin: 2px 0; background: linear-gradient(#a0a0a0, #a0a0a0) 4px 0 / 1px 100% no-repeat; }
.icon-text { font: bold 7px "Liberation Sans", sans-serif; text-anchor: middle; }
.icon-zero { font: 13px "Liberation Sans", sans-serif; text-anchor: middle; }
.test { display: flex; align-items: center; gap: 5px; width: 202px; padding-left: 50px; }
.drop { position: relative; display: flex; }
.drop select { appearance: none; width: 100%; }
.drop::after { content: ""; position: absolute; right: 6px; top: 50%; margin-top: -2px; border: 4px solid transparent; border-top-color: currentColor; border-bottom: 0; pointer-events: none; }
.test-drop { flex: 1; }
.test-drop::after { right: 4px; border-width: 3px; border-bottom: 0; }
.readout { display: flex; align-items: baseline; margin-left: auto; padding-right: 11px; color: #000080; gap: 12px; }
.readout b { font: bold 23px/26px "Liberation Sans", sans-serif; }
.readout span { font: 11px/26px "Noto Sans", sans-serif; color: #000; margin-left: -9px; }

.chart { width: 100%; height: auto; font-family: "Liberation Sans", sans-serif; }
.crisp, .crisp * { shape-rendering: crispEdges; }
.grid-solid { stroke: #06222c; }
.grid-dots { stroke: #0a2834; stroke-dasharray: 1 4; }
.revs { stroke: #606468; stroke-dasharray: 4 3; }
.trace { fill: none; }
.zero { stroke: #fff; stroke-dasharray: 2 3; }
.axis { fill: none; stroke: #fff; }
.flag { font-size: 8px; font-weight: bold; fill: #fff; text-anchor: middle; }
.axis-y text { font-size: 11px; fill: #fff; text-anchor: end; }
.axis-x text { font-size: 11px; fill: #fff; text-anchor: middle; }
.channel { font-size: 13px; }
.measure text, .degree { font-size: 19px; }
.tags rect { fill: #cfc; }
.tags text, .ruler text { font-size: 12px; text-anchor: middle; }
.ruler rect { fill: #cfc; stroke: #777; }
.minor { stroke: #777; }
.major { stroke: #000; }
.notes rect { fill: #fff; stroke: #000; stroke-width: 1px; paint-order: stroke; }
.notes text { font-size: 11px; fill: #f00; text-anchor: middle; }
.arrows path { fill: none; stroke: #ee0; marker-end: url(#arrow); }
.callout rect { fill: #ffffc8; stroke: #f00; filter: drop-shadow(2px 3px 3px #444); }
.callout text { font-size: 16px; font-weight: bold; }

.scrollrow { display: flex; height: 18px; padding: 0 2px 0 1px; font-size: 12px; background: #fff; }
.scrollrow svg { width: 16px; height: 16px; }
.small { width: 17px; background: #f0f0f0; border-right: 1px solid #aaa; border-bottom: 1px solid #aaa; display: grid; place-items: center; }
.raised { width: 18px; background: #f0f0f0; border: 1px solid; border-color: #fff #777 #777 #fff; display: grid; place-items: center; }
.nav { width: 24px; }
.span-drop { width: 68px; padding-left: 2px; }
.step-drop { width: 64px; padding-left: 2px; }
.track { flex: 1; padding-left: 107px; background: repeating-conic-gradient(#fff 0 25%, #eee 0 50%) 0 0 / 2px 2px; }
.thumb { display: block; width: 17px; height: 18px; background: #f0f0f0; border: 1px solid; border-color: #fff #777 #777 #fff; }
.page { width: 56px; text-align: center; line-height: 18px; background: #fff; }

.panel { flex: 1; display: flex; flex-direction: column; align-items: center; border-left: 1px solid #808080; border-right: 1px solid #fff; border-bottom: 1px solid #808080; }
.splitter { width: 766px; max-width: 100%; height: 7px; border: 1px solid #a0a0a0; display: flex; align-items: center; gap: 4px; padding: 0 4px; }
.splitter i { border: 3px solid transparent; border-top: 4px solid #3399ff; border-bottom: 0; }
.splitter span { flex: 1; border-top: 1px dotted #3399ff; }
.groups { display: flex; gap: 5px; padding-top: 3px; }
.group { margin: 0; padding: 0; border: 1px solid #c0c0c0; border-radius: 4px; min-width: 0; height: 72px; margin-top: 5px; }
fieldset.group { height: 77px; margin-top: 0; }
legend { margin-left: 6px; padding: 0 1px; font: bold 12px/14px "Liberation Sans", sans-serif; color: #000080; }
.group-channel { width: 303px; display: flex; justify-content: space-between; }
.group-freq { width: 105px; }
.group-sync { width: 124px; }
.group-sync legend { color: #707070; font-size: 11px; }
.group-control { width: 133px; }
.group-control legend { color: #99b4d1; font-size: 12px; }
.channels { display: flex; gap: 2px; margin-top: -5px; padding-left: 4px; background: #f0f0f0; }
.ch { width: 25px; height: 19px; border: 1px solid #003c74; border-radius: 1px; background: linear-gradient(#d0d0d0, #bcbcbc); color: #888; font-size: 12px; }
.ch-red { width: 47px; background: linear-gradient(#f33, #e00); color: #000; font-weight: bold; }
.ch-cyan { background: #0ff; color: #000; font-weight: bold; }
.row { display: flex; gap: 4px; padding: 6px 0 0 6px; align-items: center; }
.row-tools { gap: 1px; padding: 1px 0 0 8px; }
.sensor { display: flex; width: 177px; height: 21px; padding: 1px; border: 1px solid #f00; background: #fff; }
.sensor input { flex: 1; min-width: 0; padding-left: 2px; }
.sensor button { width: 17px; font-weight: bold; line-height: 8px; background: #f0f0f0; border: 1px solid; border-color: #fff #777 #777 #fff; }
.i20 { width: 20px; height: 20px; }
.mini { width: 24px; height: 23px; display: grid; place-items: center; }
.mini svg { width: 18px; height: 18px; }
.pressed-flat { background: #f8f8f8; }
.fx { display: block; font: italic bold 14px/22px "Liberation Serif", serif; }
.fx sub { font-size: 9px; line-height: 0; }
.knob { font-family: "Liberation Sans", sans-serif; font-size: 9px; }
.group-channel .knob { width: 92px; height: 68px; margin-right: 3px; }
.group-freq .knob { width: 96px; height: 64px; margin: -4px 0 0 2px; }
.knob-ring { fill: #ddd; stroke: #444; stroke-width: 3px; }
.knob-value { font-size: 11px; text-anchor: middle; }
.fine-ticks { fill: none; stroke: #999; stroke-width: 4px; stroke-dasharray: 1 1; }
.cover { fill: #f0f0f0; }
.knob-tick { stroke: #333; fill: none; }
.sync-grid { display: grid; grid-template-columns: repeat(4, 24px); column-gap: 4px; row-gap: 5px; padding: 0 0 0 6px; margin-top: 3px; }
.sync-drop { grid-column: span 2; width: 47px; height: 22px; border: 1px solid #aaa; padding-left: 4px; color: #777; font-size: 12px; }
.control-grid { display: grid; grid-template-columns: 40px 40px 40px; gap: 2px 3px; padding-left: 3px; margin-top: -2px; }
.ctl { height: 29px; border: 1px solid #003c74; border-radius: 2px; background: linear-gradient(#fff, #eee); }
.ctl svg { margin: auto; max-width: 36px; height: 24px; }
.ctl-off { border-color: #aaa; background: #f0f0f0; }
.ctl-green { border: 1px solid #0f0; outline: 1px solid #8f8; outline-offset: -2px; }
.ctl-start { grid-column: span 2; display: flex; align-items: center; padding-left: 8px; gap: 20px; font-weight: bold; font-size: 12px; }
.ctl-start svg { margin: 0; height: 20px; }
.rate { align-self: end; text-align: right; padding: 0 1px 0 0; font-weight: bold; font-size: 12px; color: #008000; }

.status { display: flex; gap: 3px; height: 19px; padding-top: 1px; font: 11px/16px Roboto, sans-serif; }
.cell { border: 1px solid; border-color: #a0a0a0 #a0a0a0 #fff #a0a0a0; padding-left: 3px; }
.cell-msg { width: 190px; border-left: 0; }
.cell-fill { flex: 1; }
.cell-ver { width: 48px; }

.taskbar { display: flex; gap: 2px; height: 30px; padding-left: 16px; background: linear-gradient(#d0d0d0, #bfbfbf); color: #fff; font: 12px/28px "Open Sans", sans-serif; }
.explorer { width: 44px; display: grid; place-items: center; }
.task { width: 160px; display: flex; align-items: center; gap: 4px; padding-left: 8px; border: 1px solid #999; background: linear-gradient(#d4d4d4, #c4c4c4); white-space: nowrap; }
.task svg { width: 16px; height: 16px; flex: none; }
.task-active { border: 2px solid #fff; background: #d4d4d4; padding-left: 7px; }
.tray { display: flex; align-items: center; gap: 8px; margin-left: auto; padding-right: 38px; }
.tray svg { width: 16px; height: 16px; }
.lang { margin-left: 8px; }
.clock { margin-left: 23px; }
```
